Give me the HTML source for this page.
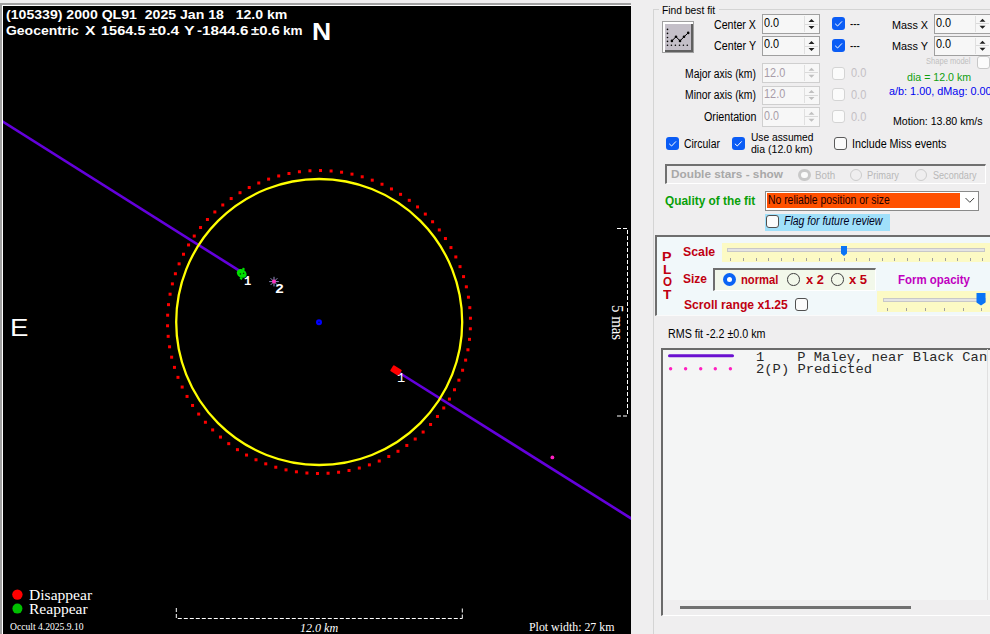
<!DOCTYPE html>
<html><head><meta charset="utf-8"><title>Occult plot</title>
<style>
html,body{margin:0;padding:0;}
body{width:990px;height:634px;overflow:hidden;position:relative;background:#efeeef;font-family:"Liberation Sans",sans-serif;}
.a{position:absolute;box-sizing:border-box;}
.t{position:absolute;white-space:pre;margin:0;padding:0;}
svg{position:absolute;left:0;top:0;}
</style></head><body>

<div class="a" style="left:0;top:3px;width:631px;height:631px;background:#a0a0a0"></div>
<div class="a" style="left:2px;top:5px;width:629px;height:629px;background:#ffffff"></div>
<div class="a" style="left:3px;top:6px;width:628px;height:628px;background:#000000"></div>
<svg width="990" height="634" viewBox="0 0 990 634">
<defs><clipPath id="pc"><rect x="3" y="6" width="628" height="628"/></clipPath></defs>
<g clip-path="url(#pc)">
<line x1="0" y1="119.8" x2="242" y2="272.4" stroke="#6400dc" stroke-width="2.6"/>
<line x1="398" y1="372" x2="640" y2="524" stroke="#6400dc" stroke-width="2.6"/>
<circle cx="319.2" cy="322" r="143" fill="none" stroke="#ffff00" stroke-width="2.3"/>
<rect x="319.01" y="169.01" width="3" height="3" fill="#ff0000"/>
<rect x="329.58" y="169.48" width="3" height="3" fill="#ff0000"/>
<rect x="340.08" y="170.69" width="3" height="3" fill="#ff0000"/>
<rect x="350.48" y="172.63" width="3" height="3" fill="#ff0000"/>
<rect x="360.71" y="175.29" width="3" height="3" fill="#ff0000"/>
<rect x="370.74" y="178.66" width="3" height="3" fill="#ff0000"/>
<rect x="380.5" y="182.72" width="3" height="3" fill="#ff0000"/>
<rect x="389.96" y="187.45" width="3" height="3" fill="#ff0000"/>
<rect x="399.06" y="192.83" width="3" height="3" fill="#ff0000"/>
<rect x="407.77" y="198.83" width="3" height="3" fill="#ff0000"/>
<rect x="416.04" y="205.42" width="3" height="3" fill="#ff0000"/>
<rect x="423.83" y="212.58" width="3" height="3" fill="#ff0000"/>
<rect x="431.09" y="220.26" width="3" height="3" fill="#ff0000"/>
<rect x="437.81" y="228.43" width="3" height="3" fill="#ff0000"/>
<rect x="443.94" y="237.04" width="3" height="3" fill="#ff0000"/>
<rect x="449.45" y="246.07" width="3" height="3" fill="#ff0000"/>
<rect x="454.32" y="255.45" width="3" height="3" fill="#ff0000"/>
<rect x="458.53" y="265.15" width="3" height="3" fill="#ff0000"/>
<rect x="462.05" y="275.13" width="3" height="3" fill="#ff0000"/>
<rect x="464.86" y="285.32" width="3" height="3" fill="#ff0000"/>
<rect x="466.95" y="295.69" width="3" height="3" fill="#ff0000"/>
<rect x="468.32" y="306.17" width="3" height="3" fill="#ff0000"/>
<rect x="468.95" y="316.73" width="3" height="3" fill="#ff0000"/>
<rect x="468.85" y="327.3" width="3" height="3" fill="#ff0000"/>
<rect x="468" y="337.84" width="3" height="3" fill="#ff0000"/>
<rect x="466.43" y="348.3" width="3" height="3" fill="#ff0000"/>
<rect x="464.13" y="358.62" width="3" height="3" fill="#ff0000"/>
<rect x="461.11" y="368.75" width="3" height="3" fill="#ff0000"/>
<rect x="457.39" y="378.65" width="3" height="3" fill="#ff0000"/>
<rect x="453" y="388.27" width="3" height="3" fill="#ff0000"/>
<rect x="447.94" y="397.56" width="3" height="3" fill="#ff0000"/>
<rect x="442.25" y="406.47" width="3" height="3" fill="#ff0000"/>
<rect x="435.94" y="414.96" width="3" height="3" fill="#ff0000"/>
<rect x="429.07" y="422.99" width="3" height="3" fill="#ff0000"/>
<rect x="421.65" y="430.53" width="3" height="3" fill="#ff0000"/>
<rect x="413.72" y="437.52" width="3" height="3" fill="#ff0000"/>
<rect x="405.32" y="443.95" width="3" height="3" fill="#ff0000"/>
<rect x="396.49" y="449.78" width="3" height="3" fill="#ff0000"/>
<rect x="387.28" y="454.97" width="3" height="3" fill="#ff0000"/>
<rect x="377.73" y="459.51" width="3" height="3" fill="#ff0000"/>
<rect x="367.89" y="463.37" width="3" height="3" fill="#ff0000"/>
<rect x="357.8" y="466.54" width="3" height="3" fill="#ff0000"/>
<rect x="347.52" y="469" width="3" height="3" fill="#ff0000"/>
<rect x="337.08" y="470.73" width="3" height="3" fill="#ff0000"/>
<rect x="326.56" y="471.73" width="3" height="3" fill="#ff0000"/>
<rect x="315.99" y="471.99" width="3" height="3" fill="#ff0000"/>
<rect x="305.42" y="471.52" width="3" height="3" fill="#ff0000"/>
<rect x="294.92" y="470.31" width="3" height="3" fill="#ff0000"/>
<rect x="284.52" y="468.37" width="3" height="3" fill="#ff0000"/>
<rect x="274.29" y="465.71" width="3" height="3" fill="#ff0000"/>
<rect x="264.26" y="462.34" width="3" height="3" fill="#ff0000"/>
<rect x="254.5" y="458.28" width="3" height="3" fill="#ff0000"/>
<rect x="245.04" y="453.55" width="3" height="3" fill="#ff0000"/>
<rect x="235.94" y="448.17" width="3" height="3" fill="#ff0000"/>
<rect x="227.23" y="442.17" width="3" height="3" fill="#ff0000"/>
<rect x="218.96" y="435.58" width="3" height="3" fill="#ff0000"/>
<rect x="211.17" y="428.42" width="3" height="3" fill="#ff0000"/>
<rect x="203.91" y="420.74" width="3" height="3" fill="#ff0000"/>
<rect x="197.19" y="412.57" width="3" height="3" fill="#ff0000"/>
<rect x="191.06" y="403.96" width="3" height="3" fill="#ff0000"/>
<rect x="185.55" y="394.93" width="3" height="3" fill="#ff0000"/>
<rect x="180.68" y="385.55" width="3" height="3" fill="#ff0000"/>
<rect x="176.47" y="375.85" width="3" height="3" fill="#ff0000"/>
<rect x="172.95" y="365.87" width="3" height="3" fill="#ff0000"/>
<rect x="170.14" y="355.68" width="3" height="3" fill="#ff0000"/>
<rect x="168.05" y="345.31" width="3" height="3" fill="#ff0000"/>
<rect x="166.68" y="334.83" width="3" height="3" fill="#ff0000"/>
<rect x="166.05" y="324.27" width="3" height="3" fill="#ff0000"/>
<rect x="166.15" y="313.7" width="3" height="3" fill="#ff0000"/>
<rect x="167" y="303.16" width="3" height="3" fill="#ff0000"/>
<rect x="168.57" y="292.7" width="3" height="3" fill="#ff0000"/>
<rect x="170.87" y="282.38" width="3" height="3" fill="#ff0000"/>
<rect x="173.89" y="272.25" width="3" height="3" fill="#ff0000"/>
<rect x="177.61" y="262.35" width="3" height="3" fill="#ff0000"/>
<rect x="182" y="252.73" width="3" height="3" fill="#ff0000"/>
<rect x="187.06" y="243.44" width="3" height="3" fill="#ff0000"/>
<rect x="192.75" y="234.53" width="3" height="3" fill="#ff0000"/>
<rect x="199.06" y="226.04" width="3" height="3" fill="#ff0000"/>
<rect x="205.93" y="218.01" width="3" height="3" fill="#ff0000"/>
<rect x="213.35" y="210.47" width="3" height="3" fill="#ff0000"/>
<rect x="221.28" y="203.48" width="3" height="3" fill="#ff0000"/>
<rect x="229.68" y="197.05" width="3" height="3" fill="#ff0000"/>
<rect x="238.51" y="191.22" width="3" height="3" fill="#ff0000"/>
<rect x="247.72" y="186.03" width="3" height="3" fill="#ff0000"/>
<rect x="257.27" y="181.49" width="3" height="3" fill="#ff0000"/>
<rect x="267.11" y="177.63" width="3" height="3" fill="#ff0000"/>
<rect x="277.2" y="174.46" width="3" height="3" fill="#ff0000"/>
<rect x="287.48" y="172" width="3" height="3" fill="#ff0000"/>
<rect x="297.92" y="170.27" width="3" height="3" fill="#ff0000"/>
<rect x="308.44" y="169.27" width="3" height="3" fill="#ff0000"/>
<circle cx="319" cy="322.2" r="3" fill="#0000ff"/><circle cx="319" cy="322.2" r="0.7" fill="#000033"/>
<g transform="translate(241.7 273.4) rotate(32)"><ellipse cx="0" cy="0" rx="5.2" ry="4.1" fill="#00dd00"/><rect x="-2" y="-5.6" width="2.4" height="2" fill="#00dd00"/><rect x="1" y="3.6" width="2.4" height="2" fill="#00dd00"/><circle cx="1.6" cy="-1" r="0.8" fill="#004400"/><circle cx="-0.8" cy="1.2" r="0.8" fill="#004400"/></g>
<g transform="translate(396 370.5) rotate(32)"><rect x="-5" y="-3.5" width="10" height="7" rx="1" fill="#ff0000"/></g>
<line x1="269.2" y1="281.6" x2="278.8" y2="281.6" stroke="#a0a0d8" stroke-width="0.9"/>
<line x1="270.61" y1="278.21" x2="277.39" y2="284.99" stroke="#a0a0d8" stroke-width="0.9"/>
<line x1="274" y1="276.8" x2="274" y2="286.4" stroke="#a0a0d8" stroke-width="0.9"/>
<line x1="277.39" y1="278.21" x2="270.61" y2="284.99" stroke="#a0a0d8" stroke-width="0.9"/>
<circle cx="274" cy="281.6" r="2" fill="#ff30c0"/>
<circle cx="552.4" cy="457.4" r="1.9" fill="#ff20c0"/>
<circle cx="17.4" cy="594.6" r="5.2" fill="#ff0000"/>
<circle cx="17.4" cy="608.6" r="5" fill="#00c000"/>
<path d="M176.3 608 V618.5 H462.3" stroke="#ffffff" stroke-width="1" stroke-dasharray="4 2" fill="none"/>
<path d="M462.3 618.5 V608" stroke="#ffffff" stroke-width="1" stroke-dasharray="4 2" fill="none"/>
<path d="M617 228.5 H627.5 V416" stroke="#ffffff" stroke-width="1" stroke-dasharray="4 2" fill="none"/>
<path d="M617 416 H627.5" stroke="#ffffff" stroke-width="1" stroke-dasharray="4 2" fill="none"/>
</g></svg>
<div class="a" style="left:653px;top:9px;width:400px;height:700px;border:1px solid #d4d4d4;"></div>
<div class="a" style="left:659px;top:0px;width:60px;height:13px;background:#efeeef;"></div>
<div class="a" style="left:662px;top:21px;width:32px;height:32px;background:#a0a0a0;"></div>
<div class="a" style="left:663px;top:22px;width:30px;height:30px;background:#ffffff;"></div>
<div class="a" style="left:665px;top:24px;width:28px;height:28px;background:#606060;"></div>
<div class="a" style="left:665px;top:24px;width:26px;height:26px;background:#c4bfc8;"></div>
<svg width="990" height="634" style="position:absolute;left:0;top:0"><g fill="#000">
<circle cx="667.5" cy="29.4" r="0.8"/><circle cx="667.5" cy="33.4" r="0.8"/><circle cx="667.5" cy="37.5" r="0.8"/><circle cx="667.5" cy="41.4" r="0.8"/><circle cx="667.5" cy="45.3" r="0.8"/>
<circle cx="671.4" cy="45.3" r="0.8"/><circle cx="675.4" cy="45.3" r="0.8"/><circle cx="679.5" cy="45.3" r="0.8"/><circle cx="683.4" cy="45.3" r="0.8"/><circle cx="687.3" cy="45.3" r="0.8"/>
<circle cx="671.9" cy="40.9" r="1.3"/><circle cx="676" cy="36.7" r="1.3"/><circle cx="680" cy="40.9" r="1.3"/><circle cx="684" cy="36.8" r="1.3"/><circle cx="688.2" cy="32.9" r="1.3"/>
</g><polyline points="671.9,40.9 676,36.7 680,40.9 684,36.8 688.2,32.9" fill="none" stroke="#000" stroke-width="1"/></svg>
<div class="a" style="left:762px;top:14px;width:58px;height:20px;border:1px solid #a0a0a0;background:#f7f7f7;"></div>
<div class="a" style="left:804px;top:16px;width:14px;height:16px;border-left:1px solid #e0e0e0;"></div>
<div class="a" style="left:805px;top:23.5px;width:13px;height:1px;background:#dadada;"></div>
<svg width="990" height="634" style="position:absolute;left:0;top:0"><path d="M808.5 22 L811.5 19 L814.5 22Z M808.5 26 L811.5 29 L814.5 26Z" fill="#202020"/></svg>
<div class="a" style="left:762px;top:36px;width:58px;height:20px;border:1px solid #a0a0a0;background:#f7f7f7;"></div>
<div class="a" style="left:804px;top:38px;width:14px;height:16px;border-left:1px solid #e0e0e0;"></div>
<div class="a" style="left:805px;top:45.5px;width:13px;height:1px;background:#dadada;"></div>
<svg width="990" height="634" style="position:absolute;left:0;top:0"><path d="M808.5 44 L811.5 41 L814.5 44Z M808.5 48 L811.5 51 L814.5 48Z" fill="#202020"/></svg>
<div class="a" style="left:934px;top:14px;width:57px;height:19.5px;border:1px solid #a0a0a0;background:#f7f7f7;"></div>
<div class="a" style="left:975px;top:16px;width:14px;height:15.5px;border-left:1px solid #e0e0e0;"></div>
<div class="a" style="left:976px;top:23.25px;width:13px;height:1px;background:#dadada;"></div>
<svg width="990" height="634" style="position:absolute;left:0;top:0"><path d="M979.5 21.75 L982.5 18.75 L985.5 21.75Z M979.5 25.75 L982.5 28.75 L985.5 25.75Z" fill="#202020"/></svg>
<div class="a" style="left:934px;top:36px;width:57px;height:19.5px;border:1px solid #a0a0a0;background:#f7f7f7;"></div>
<div class="a" style="left:975px;top:38px;width:14px;height:15.5px;border-left:1px solid #e0e0e0;"></div>
<div class="a" style="left:976px;top:45.25px;width:13px;height:1px;background:#dadada;"></div>
<svg width="990" height="634" style="position:absolute;left:0;top:0"><path d="M979.5 43.75 L982.5 40.75 L985.5 43.75Z M979.5 47.75 L982.5 50.75 L985.5 47.75Z" fill="#202020"/></svg>
<div class="a" style="left:762px;top:63px;width:58px;height:19.5px;border:1px solid #cfcfcf;background:#f7f7f7;"></div>
<div class="a" style="left:804px;top:65px;width:14px;height:15.5px;border-left:1px solid #e0e0e0;"></div>
<div class="a" style="left:805px;top:72.25px;width:13px;height:1px;background:#dadada;"></div>
<svg width="990" height="634" style="position:absolute;left:0;top:0"><path d="M808.5 70.75 L811.5 67.75 L814.5 70.75Z M808.5 74.75 L811.5 77.75 L814.5 74.75Z" fill="#c0c0c0"/></svg>
<div class="a" style="left:762px;top:85.5px;width:58px;height:19px;border:1px solid #cfcfcf;background:#f7f7f7;"></div>
<div class="a" style="left:804px;top:87.5px;width:14px;height:15px;border-left:1px solid #e0e0e0;"></div>
<div class="a" style="left:805px;top:94.5px;width:13px;height:1px;background:#dadada;"></div>
<svg width="990" height="634" style="position:absolute;left:0;top:0"><path d="M808.5 93 L811.5 90 L814.5 93Z M808.5 97 L811.5 100 L814.5 97Z" fill="#c0c0c0"/></svg>
<div class="a" style="left:762px;top:107px;width:58px;height:19.5px;border:1px solid #cfcfcf;background:#f7f7f7;"></div>
<div class="a" style="left:804px;top:109px;width:14px;height:15.5px;border-left:1px solid #e0e0e0;"></div>
<div class="a" style="left:805px;top:116.25px;width:13px;height:1px;background:#dadada;"></div>
<svg width="990" height="634" style="position:absolute;left:0;top:0"><path d="M808.5 114.75 L811.5 111.75 L814.5 114.75Z M808.5 118.75 L811.5 121.75 L814.5 118.75Z" fill="#c0c0c0"/></svg>
<div class="a" style="left:832px;top:17px;width:13px;height:13px;background:#0a5cf5;border-radius:3px;"></div>
<svg width="990" height="634" style="position:absolute;left:0;top:0"><path d="M835.2 23.8 L837.6 26 L842 21.4" fill="none" stroke="#fff" stroke-width="1"/></svg>
<div class="a" style="left:832px;top:39px;width:13px;height:13px;background:#0a5cf5;border-radius:3px;"></div>
<svg width="990" height="634" style="position:absolute;left:0;top:0"><path d="M835.2 45.8 L837.6 48 L842 43.4" fill="none" stroke="#fff" stroke-width="1"/></svg>
<div class="a" style="left:977.3px;top:56.4px;width:13px;height:13px;border:1px solid #c8c8c8;border-radius:3px;background:#fbfbfb;"></div>
<div class="a" style="left:832px;top:66.5px;width:13px;height:13px;border:1px solid #d4d4d4;border-radius:3px;background:#fbfbfb;"></div>
<div class="a" style="left:832px;top:88px;width:13px;height:13px;border:1px solid #d4d4d4;border-radius:3px;background:#fbfbfb;"></div>
<div class="a" style="left:832px;top:109.5px;width:13px;height:13px;border:1px solid #d4d4d4;border-radius:3px;background:#fbfbfb;"></div>
<div class="a" style="left:666px;top:137px;width:13px;height:13px;background:#0a5cf5;border-radius:3px;"></div>
<svg width="990" height="634" style="position:absolute;left:0;top:0"><path d="M669.2 143.8 L671.6 146 L676 141.4" fill="none" stroke="#fff" stroke-width="1"/></svg>
<div class="a" style="left:731.7px;top:137px;width:13px;height:13px;background:#0a5cf5;border-radius:3px;"></div>
<svg width="990" height="634" style="position:absolute;left:0;top:0"><path d="M734.9 143.8 L737.3 146 L741.7 141.4" fill="none" stroke="#fff" stroke-width="1"/></svg>
<div class="a" style="left:834px;top:137.3px;width:13px;height:13px;border:1px solid #5a5a5a;border-radius:3px;background:#fbfbfb;"></div>
<div class="a" style="left:665px;top:163.5px;width:321px;height:20px;border-top:2px solid #707070;border-left:2px solid #707070;border-bottom:1px solid #ffffff;border-right:1px solid #ffffff;"></div>
<div class="a" style="left:798.2px;top:168.6px;width:12.4px;height:12.4px;border-radius:50%;border:3.5px solid #c8c8c8;background:#fafafa;"></div>
<div class="a" style="left:850.1px;top:168.6px;width:12.4px;height:12.4px;border-radius:50%;border:1px solid #cccccc;"></div>
<div class="a" style="left:915.1px;top:168.6px;width:12.4px;height:12.4px;border-radius:50%;border:1px solid #cccccc;"></div>
<div class="a" style="left:765px;top:190.5px;width:214px;height:20.5px;border:1px solid #8a8a8a;background:#ffffff;"></div>
<div class="a" style="left:767px;top:193px;width:192.5px;height:15px;background:#ff5000;"></div>
<svg width="990" height="634" style="position:absolute;left:0;top:0"><path d="M965.5 198 L969.8 202.3 L974.1 198" fill="none" stroke="#404040" stroke-width="1"/></svg>
<div class="a" style="left:765px;top:213.5px;width:125px;height:17px;background:#a0e0fa;"></div>
<div class="a" style="left:765.5px;top:215px;width:13px;height:13px;border:1px solid #505050;border-radius:3px;background:#fbfbfb;"></div>
<div class="a" style="left:655px;top:235px;width:340px;height:80.5px;background:#f1f8fa;border-top:2px solid #6e6e6e;border-left:2px solid #6e6e6e;border-bottom:1px solid #fafafa;"></div>
<div class="a" style="left:722px;top:243px;width:270px;height:19px;background:#fcfac4;"></div>
<div class="a" style="left:727px;top:248px;width:258px;height:4px;background:#e4e4e4;border:1px solid #c8c8c8;"></div>
<div class="a" style="left:730.4px;top:258px;width:1px;height:3px;background:#a0a0a0;"></div>
<div class="a" style="left:743px;top:258px;width:1px;height:3px;background:#a0a0a0;"></div>
<div class="a" style="left:755.59px;top:258px;width:1px;height:3px;background:#a0a0a0;"></div>
<div class="a" style="left:768.18px;top:258px;width:1px;height:3px;background:#a0a0a0;"></div>
<div class="a" style="left:780.78px;top:258px;width:1px;height:3px;background:#a0a0a0;"></div>
<div class="a" style="left:793.38px;top:258px;width:1px;height:3px;background:#a0a0a0;"></div>
<div class="a" style="left:805.97px;top:258px;width:1px;height:3px;background:#a0a0a0;"></div>
<div class="a" style="left:818.56px;top:258px;width:1px;height:3px;background:#a0a0a0;"></div>
<div class="a" style="left:831.16px;top:258px;width:1px;height:3px;background:#a0a0a0;"></div>
<div class="a" style="left:843.75px;top:258px;width:1px;height:3px;background:#a0a0a0;"></div>
<div class="a" style="left:856.35px;top:258px;width:1px;height:3px;background:#a0a0a0;"></div>
<div class="a" style="left:868.94px;top:258px;width:1px;height:3px;background:#a0a0a0;"></div>
<div class="a" style="left:881.54px;top:258px;width:1px;height:3px;background:#a0a0a0;"></div>
<div class="a" style="left:894.13px;top:258px;width:1px;height:3px;background:#a0a0a0;"></div>
<div class="a" style="left:906.73px;top:258px;width:1px;height:3px;background:#a0a0a0;"></div>
<div class="a" style="left:919.33px;top:258px;width:1px;height:3px;background:#a0a0a0;"></div>
<div class="a" style="left:931.92px;top:258px;width:1px;height:3px;background:#a0a0a0;"></div>
<div class="a" style="left:944.51px;top:258px;width:1px;height:3px;background:#a0a0a0;"></div>
<div class="a" style="left:957.11px;top:258px;width:1px;height:3px;background:#a0a0a0;"></div>
<div class="a" style="left:969.7px;top:258px;width:1px;height:3px;background:#a0a0a0;"></div>
<div class="a" style="left:982.3px;top:258px;width:1px;height:3px;background:#a0a0a0;"></div>
<svg width="990" height="634" style="position:absolute;left:0;top:0"><path d="M841 246 H847 V253.5 L844 256 L841 253.5Z" fill="#0a74f5"/></svg>
<div class="a" style="left:713px;top:268px;width:163px;height:22.5px;background:#f2f8ea;border-top:2.5px solid #6e6e6e;border-left:2.5px solid #6e6e6e;border-bottom:1px solid #ffffff;border-right:1px solid #ffffff;"></div>
<div class="a" style="left:722.9px;top:273px;width:13px;height:13px;border-radius:50%;background:#0a64f5;"></div>
<div class="a" style="left:726.9px;top:277px;width:5px;height:5px;border-radius:50%;background:#ffffff;"></div>
<div class="a" style="left:787px;top:273.2px;width:12.6px;height:12.6px;border-radius:50%;border:1.2px solid #404040;"></div>
<div class="a" style="left:831px;top:273.2px;width:12.6px;height:12.6px;border-radius:50%;border:1.2px solid #404040;"></div>
<div class="a" style="left:877px;top:291px;width:115px;height:21px;background:#fcfac4;"></div>
<div class="a" style="left:883px;top:297.5px;width:103px;height:4px;background:#e4e4e4;border:1px solid #c8c8c8;"></div>
<div class="a" style="left:887.3px;top:308px;width:1px;height:3px;background:#a0a0a0;"></div>
<div class="a" style="left:906.1px;top:308px;width:1px;height:3px;background:#a0a0a0;"></div>
<div class="a" style="left:924.9px;top:308px;width:1px;height:3px;background:#a0a0a0;"></div>
<div class="a" style="left:943.7px;top:308px;width:1px;height:3px;background:#a0a0a0;"></div>
<div class="a" style="left:962.5px;top:308px;width:1px;height:3px;background:#a0a0a0;"></div>
<div class="a" style="left:981.3px;top:308px;width:1px;height:3px;background:#a0a0a0;"></div>
<svg width="990" height="634" style="position:absolute;left:0;top:0"><path d="M976.5 293 H985.5 V302.5 L981 305.5 L976.5 302.5Z" fill="#0a74f5"/></svg>
<div class="a" style="left:795.2px;top:298.4px;width:13px;height:13px;border:1px solid #505050;border-radius:3px;background:#fbfbfb;"></div>
<div class="a" style="left:660.5px;top:347.5px;width:340px;height:268.5px;background:#f4f5f5;border-top:2px solid #6a6a6a;border-left:2px solid #6a6a6a;border-bottom:1px solid #ffffff;"></div>
<div class="a" style="left:662.5px;top:600px;width:330px;height:15px;background:#efeeef;"></div>
<div class="a" style="left:680px;top:606px;width:230.5px;height:3px;background:#707070;"></div>
<div class="a" style="left:987px;top:349px;width:1px;height:251px;background:#e0e0e0;"></div>
<svg width="990" height="634" style="position:absolute;left:0;top:0"><line x1="669.5" y1="355.8" x2="732.5" y2="355.8" stroke="#6a10d0" stroke-width="3" stroke-linecap="round"/><circle cx="670.6" cy="368.8" r="1.7" fill="#ff20c0"/><circle cx="685.6" cy="368.8" r="1.7" fill="#ff20c0"/><circle cx="700.7" cy="368.8" r="1.7" fill="#ff20c0"/><circle cx="715.3" cy="368.8" r="1.7" fill="#ff20c0"/><circle cx="730.4" cy="368.8" r="1.7" fill="#ff20c0"/></svg>
<span class="t" id="t0" style="font-family:'Liberation Sans', sans-serif;font-size:13px;font-weight:bold;font-style:normal;color:#ffffff;line-height:17px;left:5.85px;top:6.20px;transform:scaleX(1.0845);transform-origin:0 0;">(105339) 2000 QL91  2025 Jan 18   12.0 km</span>
<span class="t" id="t1" style="font-family:'Liberation Sans', sans-serif;font-size:13px;font-weight:bold;font-style:normal;color:#ffffff;line-height:17px;left:5.96px;top:22.20px;transform:scaleX(1.0730);transform-origin:0 0;">Geocentric</span>
<span class="t" id="t2" style="font-family:'Liberation Sans', sans-serif;font-size:13px;font-weight:bold;font-style:normal;color:#ffffff;line-height:17px;left:84.68px;top:22.20px;transform:scaleX(1.2000);transform-origin:0 0;">X</span>
<span class="t" id="t3" style="font-family:'Liberation Sans', sans-serif;font-size:13px;font-weight:bold;font-style:normal;color:#ffffff;line-height:17px;left:101.30px;top:22.20px;transform:scaleX(1.1192);transform-origin:0 0;">1564.5</span>
<span class="t" id="t4" style="font-family:'Liberation Sans', sans-serif;font-size:13px;font-weight:bold;font-style:normal;color:#ffffff;line-height:17px;left:148.64px;top:22.20px;transform:scaleX(1.2008);transform-origin:0 0;">±0.4</span>
<span class="t" id="t5" style="font-family:'Liberation Sans', sans-serif;font-size:13px;font-weight:bold;font-style:normal;color:#ffffff;line-height:17px;left:184.35px;top:22.20px;transform:scaleX(1.2289);transform-origin:0 0;">Y</span>
<span class="t" id="t6" style="font-family:'Liberation Sans', sans-serif;font-size:13px;font-weight:bold;font-style:normal;color:#ffffff;line-height:17px;left:197.42px;top:22.20px;transform:scaleX(1.1644);transform-origin:0 0;">-1844.6</span>
<span class="t" id="t7" style="font-family:'Liberation Sans', sans-serif;font-size:13px;font-weight:bold;font-style:normal;color:#ffffff;line-height:17px;left:250.96px;top:22.20px;transform:scaleX(1.1469);transform-origin:0 0;">±0.6</span>
<span class="t" id="t8" style="font-family:'Liberation Sans', sans-serif;font-size:13px;font-weight:bold;font-style:normal;color:#ffffff;line-height:17px;left:282.96px;top:22.20px;transform:scaleX(1.0409);transform-origin:0 0;">km</span>
<span class="t" id="t9" style="font-family:'Liberation Sans', sans-serif;font-size:24px;font-weight:bold;font-style:normal;color:#ffffff;line-height:32px;left:312.43px;top:15.80px;transform:scaleX(1.1064);transform-origin:0 0;">N</span>
<span class="t" id="t10" style="font-family:'Liberation Sans', sans-serif;font-size:24.5px;font-weight:normal;font-style:normal;color:#ffffff;line-height:32px;left:9.94px;top:312.00px;transform:scaleX(1.1278);transform-origin:0 0;">E</span>
<span class="t" id="t11" style="font-family:'Liberation Mono', monospace;font-size:12px;font-weight:bold;font-style:normal;color:#ffffff;line-height:16px;left:244.09px;top:273.80px;transform:scaleX(1.0169);transform-origin:0 0;">1</span>
<span class="t" id="t12" style="font-family:'Liberation Mono', monospace;font-size:12px;font-weight:bold;font-style:normal;color:#ffffff;line-height:16px;left:275.13px;top:282.00px;transform:scaleX(1.2414);transform-origin:0 0;">2</span>
<span class="t" id="t13" style="font-family:'Liberation Mono', monospace;font-size:12px;font-weight:normal;font-style:normal;color:#ffffff;line-height:16px;left:397.29px;top:371.00px;transform:scaleX(1.1379);transform-origin:0 0;">1</span>
<span class="t" id="t14" style="font-family:'Liberation Serif', serif;font-size:15px;font-weight:normal;font-style:normal;color:#ffffff;line-height:20px;left:28.88px;top:584.70px;transform:scaleX(1.0381);transform-origin:0 0;">Disappear</span>
<span class="t" id="t15" style="font-family:'Liberation Serif', serif;font-size:15px;font-weight:normal;font-style:normal;color:#ffffff;line-height:20px;left:28.89px;top:598.60px;transform:scaleX(1.0357);transform-origin:0 0;">Reappear</span>
<span class="t" id="t16" style="font-family:'Liberation Serif', serif;font-size:10px;font-weight:normal;font-style:normal;color:#ffffff;line-height:13px;left:9.92px;top:619.60px;transform:scaleX(0.9605);transform-origin:0 0;">Occult 4.2025.9.10</span>
<span class="t" id="t17" style="font-family:'Liberation Serif', serif;font-size:12px;font-weight:normal;font-style:italic;color:#ffffff;line-height:16px;left:300.20px;top:619.50px;transform:scaleX(1.0027);transform-origin:0 0;">12.0 km</span>
<span class="t" id="t18" style="font-family:'Liberation Serif', serif;font-size:12px;font-weight:normal;font-style:normal;color:#ffffff;line-height:16px;left:528.60px;top:619.30px;transform:scaleX(0.9895);transform-origin:0 0;">Plot width: 27 km</span>
<span class="t" id="t19" style="font-family:'Liberation Serif', serif;font-size:16px;font-weight:normal;font-style:normal;color:#ffffff;line-height:21px;left:611.70px;top:289.16px;transform-origin:0px 16.00px;transform:rotate(90deg) scaleX(0.9311);">5 mas</span>
<span class="t" id="t20" style="font-family:'Liberation Sans', sans-serif;font-size:11px;font-weight:normal;font-style:normal;color:#000000;line-height:15px;left:661.76px;top:2.80px;transform:scaleX(0.9356);transform-origin:0 0;">Find best fit</span>
<span class="t" id="t21" style="font-family:'Liberation Sans', sans-serif;font-size:12px;font-weight:normal;font-style:normal;color:#000000;line-height:16px;left:714.37px;top:17.20px;transform:scaleX(0.8860);transform-origin:0 0;">Center X</span>
<span class="t" id="t22" style="font-family:'Liberation Sans', sans-serif;font-size:12px;font-weight:normal;font-style:normal;color:#000000;line-height:16px;left:714.36px;top:38.30px;transform:scaleX(0.8918);transform-origin:0 0;">Center Y</span>
<span class="t" id="t23" style="font-family:'Liberation Sans', sans-serif;font-size:12px;font-weight:normal;font-style:normal;color:#000000;line-height:16px;left:763.84px;top:14.90px;transform:scaleX(0.9051);transform-origin:0 0;">0.0</span>
<span class="t" id="t24" style="font-family:'Liberation Sans', sans-serif;font-size:12px;font-weight:normal;font-style:normal;color:#000000;line-height:16px;left:763.84px;top:36.00px;transform:scaleX(0.9051);transform-origin:0 0;">0.0</span>
<span class="t" id="t25" style="font-family:'Liberation Sans', sans-serif;font-size:11.5px;font-weight:normal;font-style:normal;color:#000000;line-height:15px;left:892.15px;top:17.80px;transform:scaleX(0.9409);transform-origin:0 0;">Mass X</span>
<span class="t" id="t26" style="font-family:'Liberation Sans', sans-serif;font-size:11.5px;font-weight:normal;font-style:normal;color:#000000;line-height:15px;left:892.15px;top:38.70px;transform:scaleX(0.9459);transform-origin:0 0;">Mass Y</span>
<span class="t" id="t27" style="font-family:'Liberation Sans', sans-serif;font-size:12px;font-weight:normal;font-style:normal;color:#000000;line-height:16px;left:935.64px;top:14.90px;transform:scaleX(0.9051);transform-origin:0 0;">0.0</span>
<span class="t" id="t28" style="font-family:'Liberation Sans', sans-serif;font-size:12px;font-weight:normal;font-style:normal;color:#000000;line-height:16px;left:935.64px;top:36.00px;transform:scaleX(0.9051);transform-origin:0 0;">0.0</span>
<span class="t" id="t29" style="font-family:'Liberation Sans', sans-serif;font-size:12px;font-weight:normal;font-style:normal;color:#000000;line-height:16px;left:850.39px;top:15.80px;transform:scaleX(0.8182);transform-origin:0 0;">---</span>
<span class="t" id="t30" style="font-family:'Liberation Sans', sans-serif;font-size:12px;font-weight:normal;font-style:normal;color:#000000;line-height:16px;left:850.39px;top:37.60px;transform:scaleX(0.8182);transform-origin:0 0;">---</span>
<span class="t" id="t31" style="font-family:'Liberation Sans', sans-serif;font-size:8.5px;font-weight:normal;font-style:normal;color:#c0c0c0;line-height:12px;left:926.04px;top:55.20px;transform:scaleX(0.8880);transform-origin:0 0;">Shape model</span>
<span class="t" id="t32" style="font-family:'Liberation Sans', sans-serif;font-size:12px;font-weight:normal;font-style:normal;color:#000000;line-height:16px;left:685.34px;top:65.90px;transform:scaleX(0.8643);transform-origin:0 0;">Major axis (km)</span>
<span class="t" id="t33" style="font-family:'Liberation Sans', sans-serif;font-size:12px;font-weight:normal;font-style:normal;color:#000000;line-height:16px;left:685.34px;top:87.40px;transform:scaleX(0.8643);transform-origin:0 0;">Minor axis (km)</span>
<span class="t" id="t34" style="font-family:'Liberation Sans', sans-serif;font-size:12px;font-weight:normal;font-style:normal;color:#000000;line-height:16px;left:703.95px;top:109.00px;transform:scaleX(0.8920);transform-origin:0 0;">Orientation</span>
<span class="t" id="t35" style="font-family:'Liberation Sans', sans-serif;font-size:12px;font-weight:normal;font-style:normal;color:#a89ca8;line-height:16px;left:763.58px;top:64.60px;transform:scaleX(0.9091);transform-origin:0 0;">12.0</span>
<span class="t" id="t36" style="font-family:'Liberation Sans', sans-serif;font-size:12px;font-weight:normal;font-style:normal;color:#a89ca8;line-height:16px;left:763.58px;top:86.00px;transform:scaleX(0.9091);transform-origin:0 0;">12.0</span>
<span class="t" id="t37" style="font-family:'Liberation Sans', sans-serif;font-size:12px;font-weight:normal;font-style:normal;color:#a89ca8;line-height:16px;left:764.04px;top:107.60px;transform:scaleX(0.8924);transform-origin:0 0;">0.0</span>
<span class="t" id="t38" style="font-family:'Liberation Sans', sans-serif;font-size:12px;font-weight:normal;font-style:normal;color:#c4c0c4;line-height:16px;left:850.63px;top:65.40px;transform:scaleX(0.9177);transform-origin:0 0;">0.0</span>
<span class="t" id="t39" style="font-family:'Liberation Sans', sans-serif;font-size:12px;font-weight:normal;font-style:normal;color:#c4c0c4;line-height:16px;left:850.63px;top:87.00px;transform:scaleX(0.9177);transform-origin:0 0;">0.0</span>
<span class="t" id="t40" style="font-family:'Liberation Sans', sans-serif;font-size:12px;font-weight:normal;font-style:normal;color:#c4c0c4;line-height:16px;left:850.63px;top:108.80px;transform:scaleX(0.9177);transform-origin:0 0;">0.0</span>
<span class="t" id="t41" style="font-family:'Liberation Sans', sans-serif;font-size:10.5px;font-weight:normal;font-style:normal;color:#10a010;line-height:14px;left:907.49px;top:69.80px;transform:scaleX(1.0128);transform-origin:0 0;">dia = 12.0 km</span>
<span class="t" id="t42" style="font-family:'Liberation Sans', sans-serif;font-size:10.5px;font-weight:normal;font-style:normal;color:#0000f0;line-height:14px;left:888.79px;top:83.70px;transform:scaleX(1.0335);transform-origin:0 0;">a/b: 1.00, dMag: 0.00</span>
<span class="t" id="t43" style="font-family:'Liberation Sans', sans-serif;font-size:11px;font-weight:normal;font-style:normal;color:#000000;line-height:15px;left:892.83px;top:113.70px;transform:scaleX(0.9640);transform-origin:0 0;">Motion: 13.80 km/s</span>
<span class="t" id="t44" style="font-family:'Liberation Sans', sans-serif;font-size:12px;font-weight:normal;font-style:normal;color:#000000;line-height:16px;left:683.88px;top:135.60px;transform:scaleX(0.8691);transform-origin:0 0;">Circular</span>
<span class="t" id="t45" style="font-family:'Liberation Sans', sans-serif;font-size:11.5px;font-weight:normal;font-style:normal;color:#000000;line-height:15px;left:750.70px;top:130.20px;transform:scaleX(0.8879);transform-origin:0 0;">Use assumed</span>
<span class="t" id="t46" style="font-family:'Liberation Sans', sans-serif;font-size:11.5px;font-weight:normal;font-style:normal;color:#000000;line-height:15px;left:751.04px;top:142.30px;transform:scaleX(0.9181);transform-origin:0 0;">dia (12.0 km)</span>
<span class="t" id="t47" style="font-family:'Liberation Sans', sans-serif;font-size:12px;font-weight:normal;font-style:normal;color:#000000;line-height:16px;left:852.32px;top:135.50px;transform:scaleX(0.8951);transform-origin:0 0;">Include Miss events</span>
<span class="t" id="t48" style="font-family:'Liberation Sans', sans-serif;font-size:11.5px;font-weight:bold;font-style:normal;color:#a8a8a8;line-height:15px;left:671.48px;top:166.70px;transform:scaleX(1.0249);transform-origin:0 0;">Double stars - show</span>
<span class="t" id="t49" style="font-family:'Liberation Sans', sans-serif;font-size:10px;font-weight:normal;font-style:normal;color:#b8b8b8;line-height:13px;left:815.22px;top:168.80px;transform:scaleX(0.9791);transform-origin:0 0;">Both</span>
<span class="t" id="t50" style="font-family:'Liberation Sans', sans-serif;font-size:10px;font-weight:normal;font-style:normal;color:#b8b8b8;line-height:13px;left:867.26px;top:168.80px;transform:scaleX(0.9286);transform-origin:0 0;">Primary</span>
<span class="t" id="t51" style="font-family:'Liberation Sans', sans-serif;font-size:10px;font-weight:normal;font-style:normal;color:#b8b8b8;line-height:13px;left:932.75px;top:168.80px;transform:scaleX(0.9091);transform-origin:0 0;">Secondary</span>
<span class="t" id="t52" style="font-family:'Liberation Sans', sans-serif;font-size:12px;font-weight:bold;font-style:normal;color:#08a008;line-height:16px;left:664.81px;top:192.80px;transform:scaleX(0.9890);transform-origin:0 0;">Quality of the fit</span>
<span class="t" id="t53" style="font-family:'Liberation Sans', sans-serif;font-size:12px;font-weight:normal;font-style:normal;color:#200000;line-height:16px;left:767.83px;top:192.00px;transform:scaleX(0.8650);transform-origin:0 0;">No reliable position or size</span>
<span class="t" id="t54" style="font-family:'Liberation Sans', sans-serif;font-size:12px;font-weight:normal;font-style:italic;color:#000020;line-height:16px;left:784.35px;top:213.40px;transform:scaleX(0.8733);transform-origin:0 0;">Flag for future review</span>
<span class="t" id="t55" style="font-family:'Liberation Sans', sans-serif;font-size:12px;font-weight:bold;font-style:normal;color:#c00010;line-height:16px;left:662.45px;top:248.60px;transform:scaleX(1.1912);transform-origin:0 0;">P</span>
<span class="t" id="t56" style="font-family:'Liberation Sans', sans-serif;font-size:12px;font-weight:bold;font-style:normal;color:#c00010;line-height:16px;left:663.10px;top:261.50px;transform:scaleX(1.1290);transform-origin:0 0;">L</span>
<span class="t" id="t57" style="font-family:'Liberation Sans', sans-serif;font-size:12px;font-weight:bold;font-style:normal;color:#c00010;line-height:16px;left:662.92px;top:274.40px;transform:scaleX(0.9643);transform-origin:0 0;">O</span>
<span class="t" id="t58" style="font-family:'Liberation Sans', sans-serif;font-size:12px;font-weight:bold;font-style:normal;color:#c00010;line-height:16px;left:663.29px;top:287.30px;transform:scaleX(1.1408);transform-origin:0 0;">T</span>
<span class="t" id="t59" style="font-family:'Liberation Sans', sans-serif;font-size:12px;font-weight:bold;font-style:normal;color:#c00010;line-height:16px;left:683.19px;top:244.40px;transform:scaleX(1.0261);transform-origin:0 0;">Scale</span>
<span class="t" id="t60" style="font-family:'Liberation Sans', sans-serif;font-size:12px;font-weight:bold;font-style:normal;color:#c00010;line-height:16px;left:683.20px;top:270.60px;transform:scaleX(0.9957);transform-origin:0 0;">Size</span>
<span class="t" id="t61" style="font-family:'Liberation Sans', sans-serif;font-size:12px;font-weight:bold;font-style:normal;color:#c00010;line-height:16px;left:741.05px;top:271.80px;transform:scaleX(0.9349);transform-origin:0 0;">normal</span>
<span class="t" id="t62" style="font-family:'Liberation Sans', sans-serif;font-size:12px;font-weight:bold;font-style:normal;color:#c00010;line-height:16px;left:805.69px;top:271.60px;transform:scaleX(1.0683);transform-origin:0 0;">x 2</span>
<span class="t" id="t63" style="font-family:'Liberation Sans', sans-serif;font-size:12px;font-weight:bold;font-style:normal;color:#c00010;line-height:16px;left:849.39px;top:271.60px;transform:scaleX(1.0859);transform-origin:0 0;">x 5</span>
<span class="t" id="t64" style="font-family:'Liberation Sans', sans-serif;font-size:12px;font-weight:bold;font-style:normal;color:#c000c0;line-height:16px;left:898.04px;top:271.70px;transform:scaleX(0.9544);transform-origin:0 0;">Form opacity</span>
<span class="t" id="t65" style="font-family:'Liberation Sans', sans-serif;font-size:12px;font-weight:bold;font-style:normal;color:#c00010;line-height:16px;left:684.10px;top:296.80px;transform:scaleX(1.0098);transform-origin:0 0;">Scroll range x1.25</span>
<span class="t" id="t66" style="font-family:'Liberation Sans', sans-serif;font-size:12px;font-weight:normal;font-style:normal;color:#000000;line-height:16px;left:668.31px;top:325.80px;transform:scaleX(0.8921);transform-origin:0 0;">RMS fit -2.2 ±0.0 km</span>
<span class="t" id="t67" style="font-family:'Liberation Mono', monospace;font-size:13.75px;font-weight:normal;font-style:normal;color:#282828;line-height:18px;left:756.20px;top:348.70px;transform:scale(1.0004,0.8800);transform-origin:0 12px;">1    P Maley, near Black Can</span>
<span class="t" id="t68" style="font-family:'Liberation Mono', monospace;font-size:13.75px;font-weight:normal;font-style:normal;color:#282828;line-height:18px;left:756.30px;top:360.80px;transform:scale(1.0053,0.8800);transform-origin:0 12px;">2(P) Predicted</span>
</body></html>
